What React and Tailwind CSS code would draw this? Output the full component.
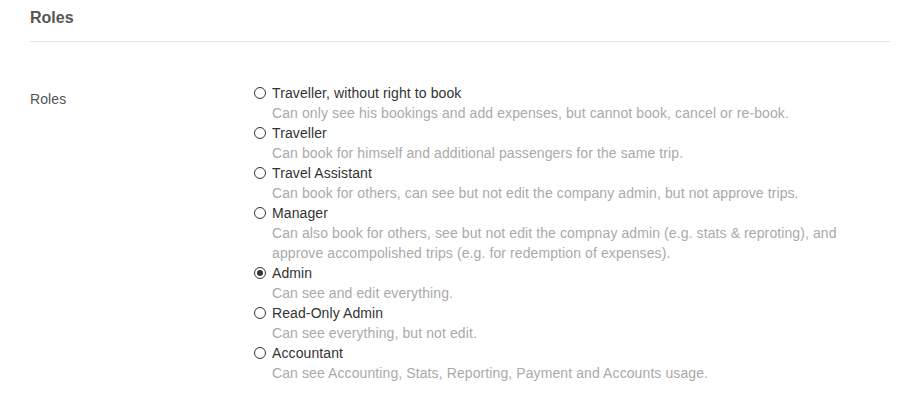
import React, { useState } from 'react';

const roles = [
  { id: 'traveller-no-book', label: 'Traveller, without right to book', desc: 'Can only see his bookings and add expenses, but cannot book, cancel or re-book.' },
  { id: 'traveller', label: 'Traveller', desc: 'Can book for himself and additional passengers for the same trip.' },
  { id: 'assistant', label: 'Travel Assistant', desc: 'Can book for others, can see but not edit the company admin, but not approve trips.' },
  { id: 'manager', label: 'Manager', desc: 'Can also book for others, see but not edit the compnay admin (e.g. stats & reproting), and approve accompolished trips (e.g. for redemption of expenses).' },
  { id: 'admin', label: 'Admin', desc: 'Can see and edit everything.' },
  { id: 'readonly', label: 'Read-Only Admin', desc: 'Can see everything, but not edit.' },
  { id: 'accountant', label: 'Accountant', desc: 'Can see Accounting, Stats, Reporting, Payment and Accounts usage.' },
];

function Radio({ checked }) {
  return (
    <span className="w-[12px] h-[12px] rounded-full border border-[#333] flex items-center justify-center shrink-0">
      {checked && <span className="w-[6px] h-[6px] rounded-full bg-[#333]" />}
    </span>
  );
}

export default function App() {
  const [role, setRole] = useState('admin');

  return (
    <div className="min-h-screen bg-white pl-[30px] pr-[24px] pt-[8px] text-[14px] tracking-[0.1px] leading-[20px] text-[#333]" style={{ fontFamily: '"Liberation Sans", Arial, sans-serif' }}>
      <h2 className="text-[16px] font-bold tracking-normal text-[#555] leading-[20px] pb-[13px] border-b border-[#e5e5e5]">
        Roles
      </h2>

      <div className="flex mt-[41px]">
        <div className="w-[224px] shrink-0 text-[#555] pt-[6px]">Roles</div>
        <div className="flex flex-col">
          {roles.map((r) => (
            <label key={r.id} className="flex flex-col cursor-pointer" onClick={() => setRole(r.id)}>
              <span className="flex items-center gap-[6px]">
                <Radio checked={role === r.id} />
                <span className="text-[#333]">{r.label}</span>
              </span>
              <span className="pl-[18px] text-[#aaa] max-w-[600px]">{r.desc}</span>
            </label>
          ))}
        </div>
      </div>
    </div>
  );
}
